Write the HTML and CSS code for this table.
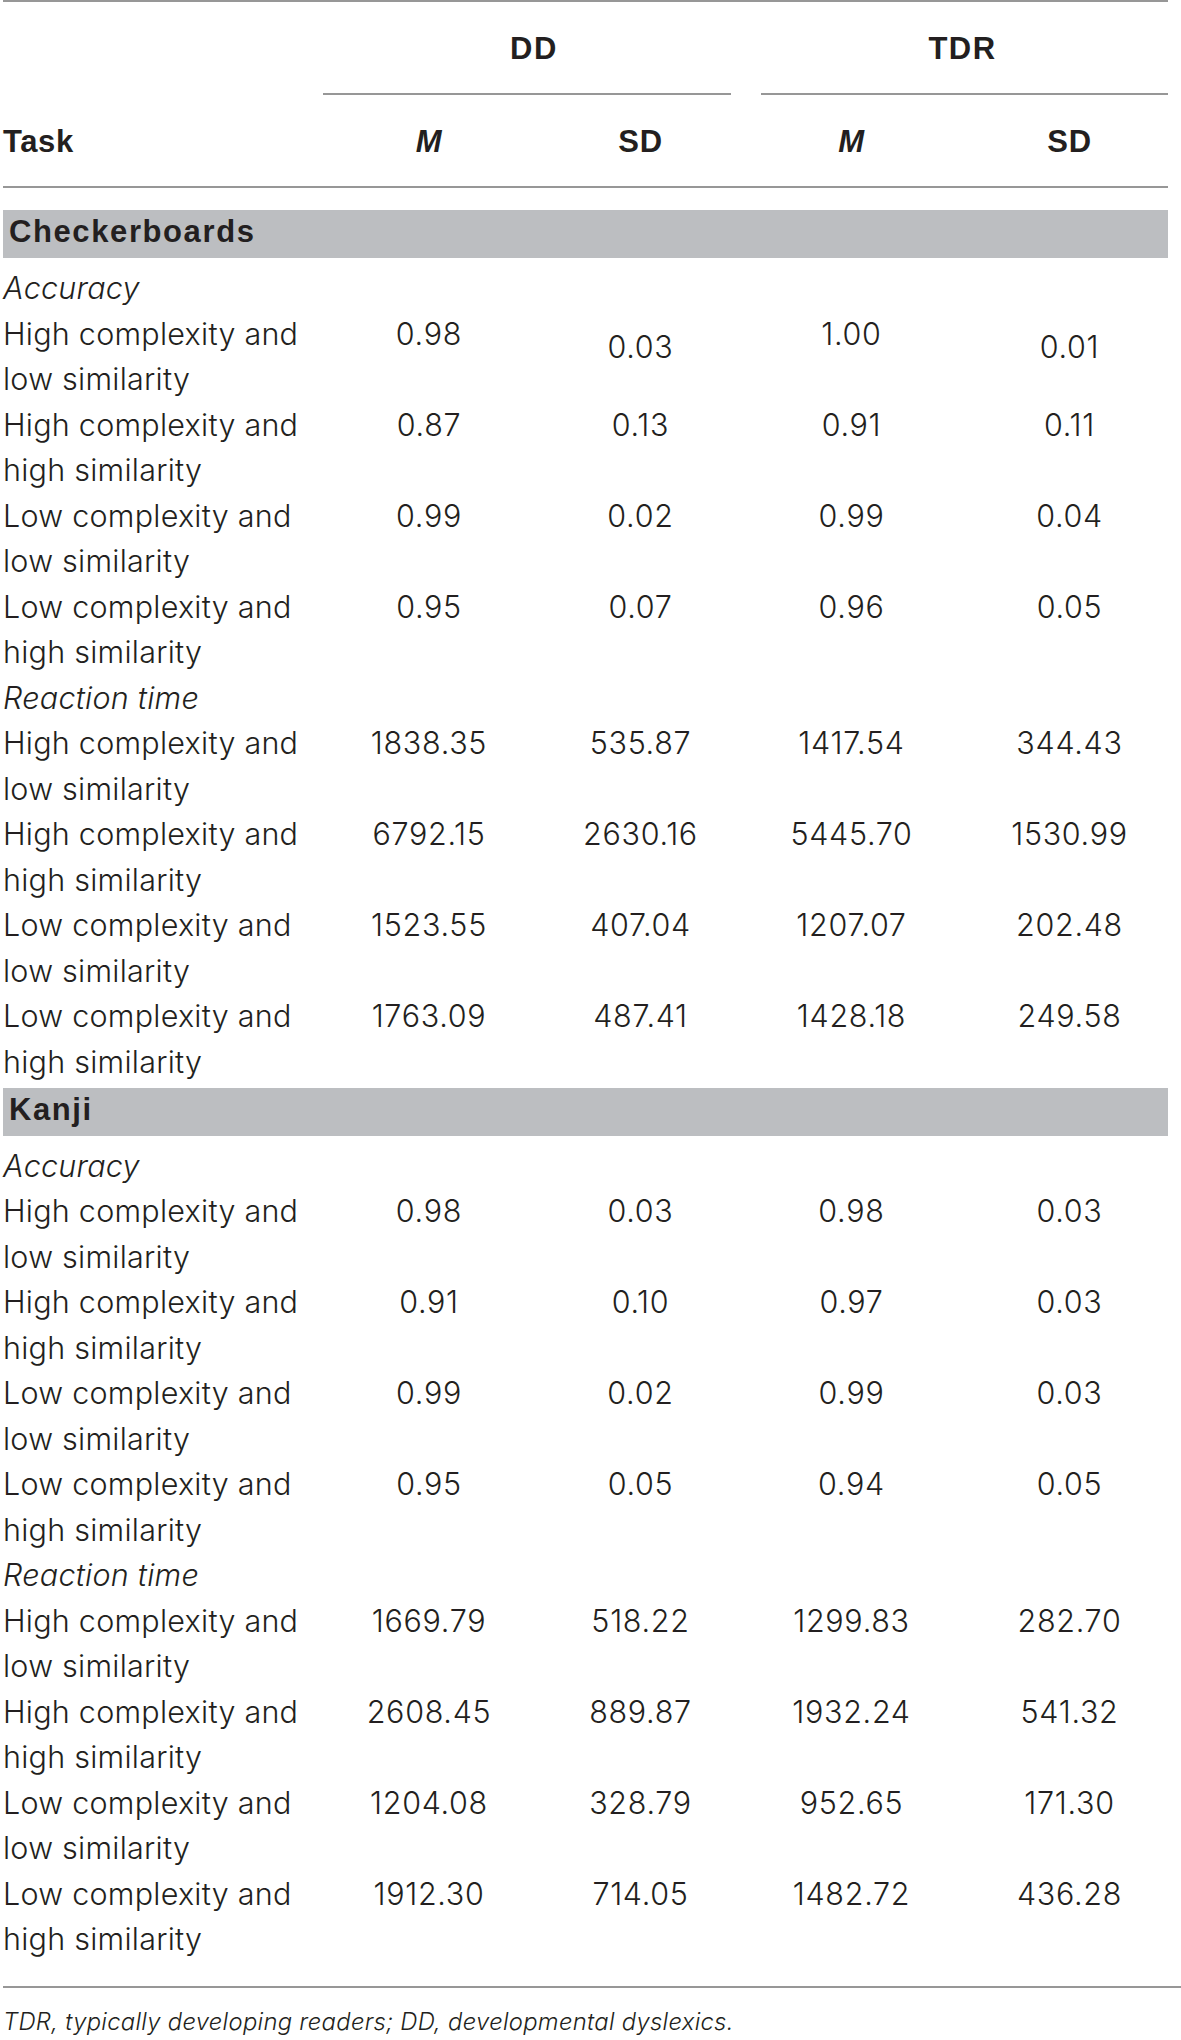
FILE: index.html
```html
<!DOCTYPE html>
<html lang="en">
<head>
<meta charset="utf-8">
<title>Table</title>
<link rel="stylesheet" href="styles.css">
</head>
<body>
<div class="sheet">
  <div class="head">
    <div class="row group-row">
      <div class="cell"></div>
      <div class="group group-dd">DD</div>
      <div class="group group-tdr">TDR</div>
    </div>
    <div class="row col-row">
      <div class="cell task">Task</div>
      <div class="cell num"><em>M</em></div>
      <div class="cell num">SD</div>
      <div class="cell num"><em>M</em></div>
      <div class="cell num">SD</div>
    </div>
  </div>

  <div class="body">
    <section class="section">
      <div class="bar">Checkerboards</div>
      <div class="lines">
        <div class="sub">Accuracy</div>
        <div class="row data"><div class="cell label">High complexity and low similarity</div><div class="cell num">0.98</div><div class="cell num drop">0.03</div><div class="cell num">1.00</div><div class="cell num drop">0.01</div></div>
        <div class="row data"><div class="cell label">High complexity and high similarity</div><div class="cell num">0.87</div><div class="cell num">0.13</div><div class="cell num">0.91</div><div class="cell num">0.11</div></div>
        <div class="row data"><div class="cell label">Low complexity and low similarity</div><div class="cell num">0.99</div><div class="cell num">0.02</div><div class="cell num">0.99</div><div class="cell num">0.04</div></div>
        <div class="row data"><div class="cell label">Low complexity and high similarity</div><div class="cell num">0.95</div><div class="cell num">0.07</div><div class="cell num">0.96</div><div class="cell num">0.05</div></div>
        <div class="sub">Reaction time</div>
        <div class="row data"><div class="cell label">High complexity and low similarity</div><div class="cell num">1838.35</div><div class="cell num">535.87</div><div class="cell num">1417.54</div><div class="cell num">344.43</div></div>
        <div class="row data"><div class="cell label">High complexity and high similarity</div><div class="cell num">6792.15</div><div class="cell num">2630.16</div><div class="cell num">5445.70</div><div class="cell num">1530.99</div></div>
        <div class="row data"><div class="cell label">Low complexity and low similarity</div><div class="cell num">1523.55</div><div class="cell num">407.04</div><div class="cell num">1207.07</div><div class="cell num">202.48</div></div>
        <div class="row data"><div class="cell label">Low complexity and high similarity</div><div class="cell num">1763.09</div><div class="cell num">487.41</div><div class="cell num">1428.18</div><div class="cell num">249.58</div></div>
      </div>
    </section>

    <section class="section">
      <div class="bar">Kanji</div>
      <div class="lines">
        <div class="sub">Accuracy</div>
        <div class="row data"><div class="cell label">High complexity and low similarity</div><div class="cell num">0.98</div><div class="cell num">0.03</div><div class="cell num">0.98</div><div class="cell num">0.03</div></div>
        <div class="row data"><div class="cell label">High complexity and high similarity</div><div class="cell num">0.91</div><div class="cell num">0.10</div><div class="cell num">0.97</div><div class="cell num">0.03</div></div>
        <div class="row data"><div class="cell label">Low complexity and low similarity</div><div class="cell num">0.99</div><div class="cell num">0.02</div><div class="cell num">0.99</div><div class="cell num">0.03</div></div>
        <div class="row data"><div class="cell label">Low complexity and high similarity</div><div class="cell num">0.95</div><div class="cell num">0.05</div><div class="cell num">0.94</div><div class="cell num">0.05</div></div>
        <div class="sub">Reaction time</div>
        <div class="row data"><div class="cell label">High complexity and low similarity</div><div class="cell num">1669.79</div><div class="cell num">518.22</div><div class="cell num">1299.83</div><div class="cell num">282.70</div></div>
        <div class="row data"><div class="cell label">High complexity and high similarity</div><div class="cell num">2608.45</div><div class="cell num">889.87</div><div class="cell num">1932.24</div><div class="cell num">541.32</div></div>
        <div class="row data"><div class="cell label">Low complexity and low similarity</div><div class="cell num">1204.08</div><div class="cell num">328.79</div><div class="cell num">952.65</div><div class="cell num">171.30</div></div>
        <div class="row data"><div class="cell label">Low complexity and high similarity</div><div class="cell num">1912.30</div><div class="cell num">714.05</div><div class="cell num">1482.72</div><div class="cell num">436.28</div></div>
      </div>
    </section>
  </div>

  <p class="note">TDR, typically developing readers; DD, developmental dyslexics.</p>
</div>
</body>
</html>
```

FILE: styles.css
```css
* {
  box-sizing: border-box;
}

html, body {
  margin: 0;
  padding: 0;
  background: #ffffff;
}

body {
  color: #231f20;
  font-family: Inter, "Liberation Sans", Arial, sans-serif;
  font-weight: 300;
}

.sheet {
  margin-left: 3px;
  width: 1165px;
}

.row {
  display: grid;
  grid-template-columns: 320px 212px 211px 211px 211px;
  font-size: 30.5px;
  line-height: 45.5px;
  letter-spacing: 0.25px;
}

.data .num {
  letter-spacing: 0.7px;
}

.row > .num:last-child {
  padding-left: 14px;
}

.head {
  border-top: 2px solid #979797;
  font-family: "Liberation Sans", Arial, sans-serif;
  font-weight: bold;
}

.head .row {
  font-size: 31px;
  letter-spacing: 0.6px;
}

.group-row .cell {
  padding: 23.5px 0 22px;
}

.group {
  grid-column: span 2;
  padding: 23.5px 0 22px;
  border-bottom: 2px solid #979797;
  text-align: center;
  letter-spacing: 1.5px;
}

.group-dd {
  margin-right: 15px;
  padding-left: 14px;
}

.group-tdr {
  margin-left: 15px;
  padding-right: 4px;
}

.col-row {
  padding: 23.5px 0 22px;
  border-bottom: 2px solid #979797;
}

.col-row em {
  font-style: italic;
}

.num {
  text-align: center;
}

.drop {
  padding-top: 13px;
}

.body {
  padding: 22px 0 21px;
  border-bottom: 2px solid #979797;
  margin-right: -13px;
}

.section {
  margin-right: 13px;
  padding-bottom: 3.5px;
}

.bar {
  height: 48px;
  padding: 0 0 4px 6px;
  background: #bcbec1;
  font-family: "Liberation Sans", Arial, sans-serif;
  font-size: 31px;
  line-height: 44px;
  font-weight: bold;
  letter-spacing: 1.6px;
}

.lines {
  margin-top: 7px;
}

.sub {
  font-size: 30.5px;
  line-height: 45.5px;
  font-style: italic;
  letter-spacing: 0.25px;
}

.label {
  padding-right: 4px;
}

.note {
  margin: 0;
  padding-top: 18.7px;
  font-size: 23.8px;
  line-height: 30px;
  font-style: italic;
  letter-spacing: 0.3px;
}
```
